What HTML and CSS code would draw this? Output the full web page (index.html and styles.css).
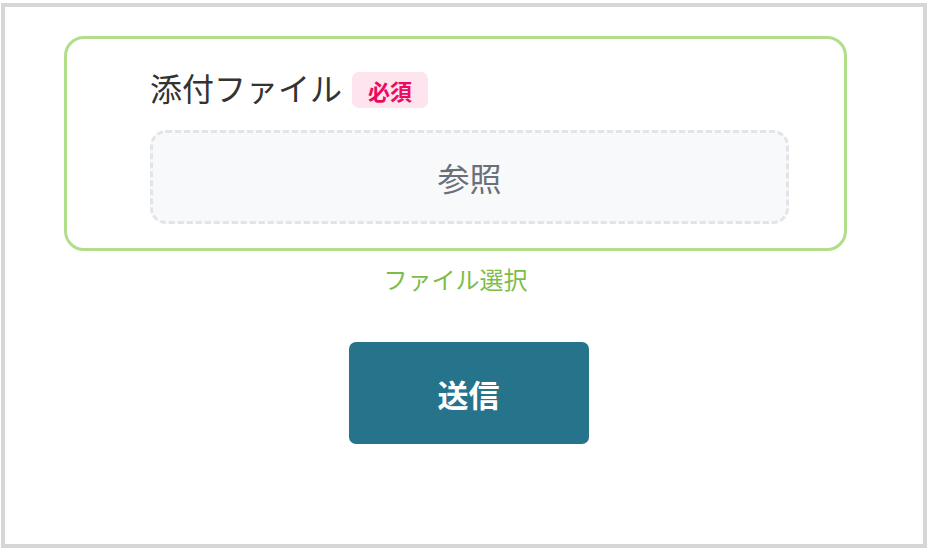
FILE: index.html
```html
<!DOCTYPE html>
<html lang="ja">
<head>
<meta charset="utf-8">
<title>添付ファイル</title>
<link rel="stylesheet" href="styles.css">
</head>
<body>
<div class="frame">
  <div class="field">
    <div class="field-head">
      <span class="field-label">添付ファイル</span>
      <span class="badge">必須</span>
    </div>
    <label class="drop">
      <span class="drop-text">参照</span>
    </label>
  </div>
  <div class="hint">ファイル選択</div>
  <div class="actions">
    <button class="submit" type="button">送信</button>
  </div>
</div>
</body>
</html>
```
FILE: styles.css
```css
* { box-sizing: border-box; }
html, body { height: 100%; }
body {
  margin: 0;
  padding: 3px 3px 2px 1px;
  background: #ffffff;
  font-family: "Noto Sans CJK JP", "Noto Sans", sans-serif;
}
.frame {
  height: 545px;
  border: 4px solid #d6d6d6;
  padding: 29px 76px 0 59px;
  display: flex;
  flex-direction: column;
}
.field {
  border: 3px solid #b1de8b;
  border-radius: 20px;
  padding: 33px 55px 24px 83px;
  display: flex;
  flex-direction: column;
  gap: 22px;
}
.field-head {
  display: flex;
  align-items: center;
  gap: 10px;
  height: 36px;
}
.field-label {
  font-size: 32px;
  color: #333333;
  line-height: 36px;
  margin-bottom: 7px;
}
.badge {
  display: inline-flex;
  align-items: center;
  justify-content: center;
  height: 36px;
  padding: 0 16px;
  border-radius: 7px;
  background: #fde4ee;
  color: #ec0a5e;
  font-size: 22px;
  font-weight: 700;
  line-height: 1;
}
.drop {
  height: 94px;
  border: 3px dashed #e3e4e8;
  border-radius: 16px;
  background: #f8f9fb;
  display: flex;
  align-items: center;
  justify-content: center;
  cursor: pointer;
}
.drop-text {
  font-size: 32px;
  color: #6b6f78;
  line-height: 1;
}
.hint {
  margin-top: 10px;
  text-align: center;
  font-size: 24px;
  line-height: 36px;
  color: #7cbd4a;
}
.actions {
  margin-top: 45px;
  padding: 0 59px 0 85px;
  display: flex;
  justify-content: center;
}
.submit {
  width: 240px;
  height: 102px;
  border: none;
  border-radius: 7px;
  background: #26748c;
  color: #ffffff;
  font-family: "Noto Sans CJK JP", "Noto Sans", sans-serif;
  font-size: 31px;
  font-weight: 700;
  cursor: pointer;
}
```
